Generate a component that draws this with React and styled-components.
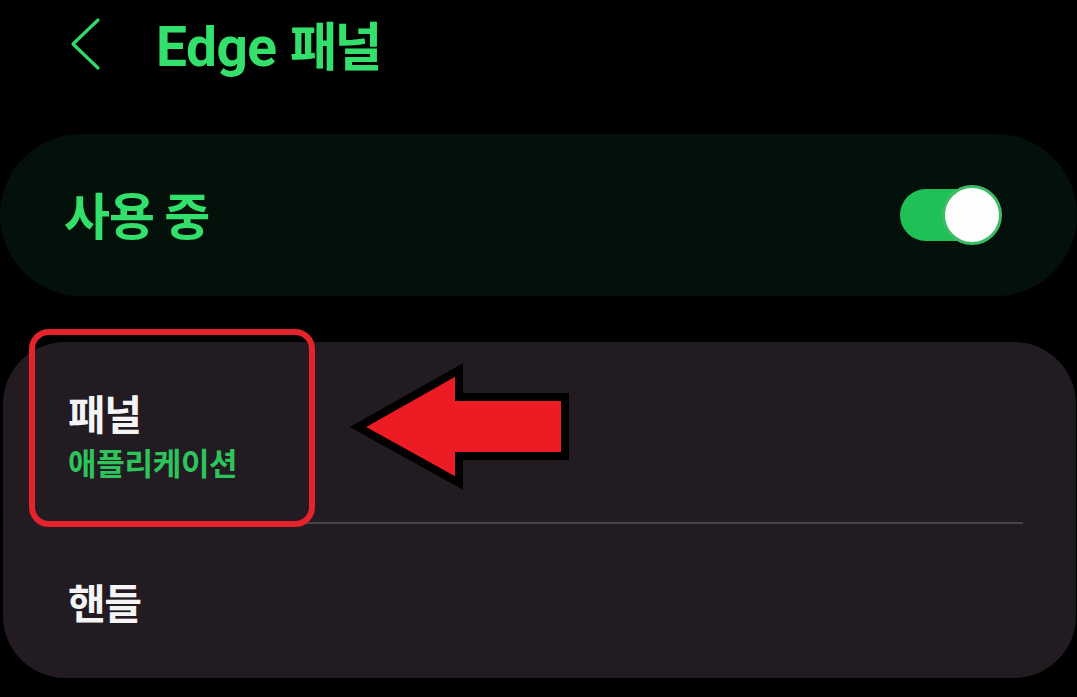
import React from 'react'
import styled, { createGlobalStyle } from 'styled-components'

const Global = createGlobalStyle`
  html, body {
    margin: 0;
    padding: 0;
    background: #000;
  }
  body {
    font-family: Roboto, "Noto Sans CJK KR", "Noto Sans", sans-serif;
    -webkit-font-smoothing: antialiased;
  }
`

const Page = styled.div`
  width: 1077px;
  height: 697px;
  overflow: hidden;
  background: #000;
`

const Header = styled.div`
  height: 134px;
  display: flex;
  align-items: flex-start;
  padding-left: 70px;
  box-sizing: border-box;
`

const Back = styled.button`
  border: 0;
  background: none;
  padding: 0;
  margin-top: 17px;
  width: 32px;
  height: 54px;
  display: flex;
`

const Title = styled.h1`
  margin: 9px 0 0 54px;
  font-size: 55px;
  line-height: 70px;
  font-weight: 700;
  color: #32e06b;
  letter-spacing: -0.5px;
`

const Hangul = styled.span`
  font-family: "Noto Sans CJK KR", sans-serif;
  font-size: ${p => p.size}px;
  letter-spacing: ${p => p.spacing}px;
`

const MasterCard = styled.div`
  height: 162px;
  border-radius: 81px;
  background: #03110a;
  display: flex;
  align-items: center;
  justify-content: space-between;
  padding: 0 75px 0 64px;
  box-sizing: border-box;
`

const MasterLabel = styled.div`
  font-family: "Noto Sans CJK KR", sans-serif;
  font-size: 50px;
  line-height: 60px;
  font-weight: 700;
  letter-spacing: -1px;
  color: #32e06b;
  margin-top: -4px;
`

const Switch = styled.div`
  position: relative;
  width: 102px;
  height: 60px;
`

const Track = styled.div`
  position: absolute;
  left: 0;
  top: 4px;
  width: 96px;
  height: 52px;
  border-radius: 26px;
  background: #1fc157;
`

const Thumb = styled.div`
  position: absolute;
  right: 0;
  top: 0;
  width: 60px;
  height: 60px;
  border-radius: 50%;
  background: #fdfdfd;
  border: 3px solid #3cbc66;
  box-sizing: border-box;
`

const Card = styled.div`
  position: relative;
  margin: 46px 1px 0 3px;
  height: 336px;
  border-radius: 62px;
  background: #221b22;
  display: flex;
  flex-direction: column;
`

const Row = styled.div`
  height: ${p => p.h}px;
  display: flex;
  flex-direction: column;
  justify-content: center;
  padding-left: 65px;
  padding-top: ${p => p.pt || 0}px;
  box-sizing: border-box;
`

const RowTitle = styled.div`
  font-family: "Noto Sans CJK KR", sans-serif;
  font-size: 41px;
  line-height: 44px;
  font-weight: 700;
  letter-spacing: -1.5px;
  color: #f4f4f4;
`

const RowSub = styled.div`
  font-family: "Noto Sans CJK KR", sans-serif;
  font-size: 31px;
  line-height: 36px;
  margin-top: 10px;
  font-weight: 700;
  letter-spacing: -0.3px;
  color: #2ec45c;
`

const Divider = styled.div`
  height: 2px;
  margin: 0 53px 0 65px;
  background: #4a434c;
`

const Highlight = styled.div`
  position: absolute;
  left: 26px;
  top: -13px;
  width: 286px;
  height: 198px;
  border: 6px solid #e6222d;
  border-radius: 20px;
  box-sizing: border-box;
`

const Arrow = styled.svg`
  position: absolute;
  left: 337px;
  top: 13px;
`

export default function App() {
  return (
    <Page>
      <Global />
      <Header>
        <Back aria-label="back">
          <svg width="32" height="54" viewBox="0 0 32 54">
            <polyline points="28,3 3,27 28,51" fill="none" stroke="#32d868" strokeWidth="3.2" strokeLinecap="round" strokeLinejoin="round" />
          </svg>
        </Back>
        <Title>
          Edge <Hangul size={52} spacing={-3}>패널</Hangul>
        </Title>
      </Header>

      <MasterCard>
        <MasterLabel>사용 중</MasterLabel>
        <Switch>
          <Track />
          <Thumb />
        </Switch>
      </MasterCard>

      <Card>
        <Row h={180} pt={6}>
          <RowTitle>패널</RowTitle>
          <RowSub>애플리케이션</RowSub>
        </Row>
        <Divider />
        <Row h={154}>
          <RowTitle>핸들</RowTitle>
        </Row>

        <Highlight />
        <Arrow width="240" height="150" viewBox="0 0 240 150">
          <polygon
            points="18,72 119,15 119,42 225,42 225,101 119,101 119,128"
            fill="#ed1c24"
            stroke="#000"
            strokeWidth="8"
            strokeLinejoin="miter"
          />
        </Arrow>
      </Card>
    </Page>
  )
}
